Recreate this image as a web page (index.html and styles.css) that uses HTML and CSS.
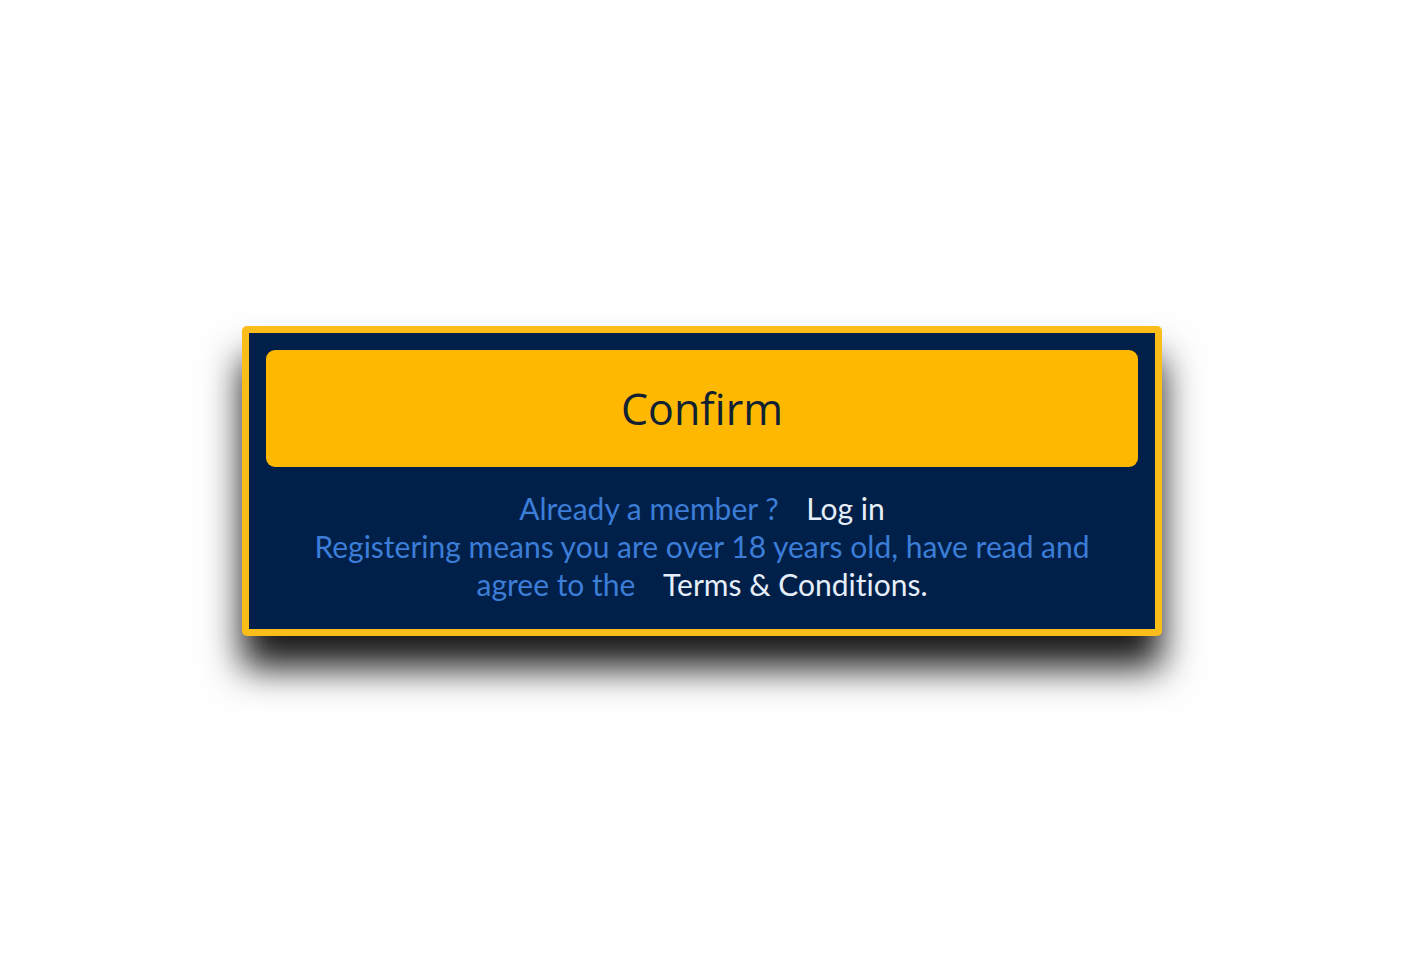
FILE: index.html
```html
<!DOCTYPE html>
<html lang="en">
<head>
    <meta charset="UTF-8">
    <meta name="viewport" content="width=device-width, initial-scale=1.0">
    <title>Confirm registration</title>
    <link rel="stylesheet" href="styles.css">
</head>
<body>
    <main class="page">
        <section class="register-box">
            <button class="confirm">Confirm</button>
            <div class="notes">
                <p>Already a member ? <a href="#" class="link">Log in</a></p>
                <p>Registering means you are over 18 years old, have read and<br>agree to the <a href="#" class="link">Terms &amp; Conditions.</a></p>
            </div>
        </section>
    </main>
</body>
</html>
```

FILE: styles.css
```css
body {
    margin: 0;
    padding: 0;
    background-color: #fefefe;
    font-family: Lato, "Open Sans", sans-serif;
}

.page {
    height: 961px;
    display: flex;
    align-items: center;
    justify-content: center;
}

.register-box {
    width: 872px;
    padding: 17px 17px 26px 17px;
    background-color: #002049;
    border: 7px solid #fbbd19;
    border-radius: 5px;
    box-shadow: 0 32px 36px 0 rgba(0, 0, 0, 0.9);
}

.confirm {
    display: block;
    width: 100%;
    height: 117px;
    border: none;
    border-radius: 9px;
    background-color: #ffb800;
    color: #102232;
    font-family: "Open Sans", sans-serif;
    font-size: 43px;
    cursor: pointer;
}

.notes {
    margin-top: 22px;
    text-align: center;
    color: #3c7dd8;
    font-size: 30px;
    line-height: 38px;
    font-variant-ligatures: none;
}

.notes p {
    margin: 0;
}

.link {
    margin-left: 20px;
    color: #e6eef9;
    text-decoration: none;
}
```
